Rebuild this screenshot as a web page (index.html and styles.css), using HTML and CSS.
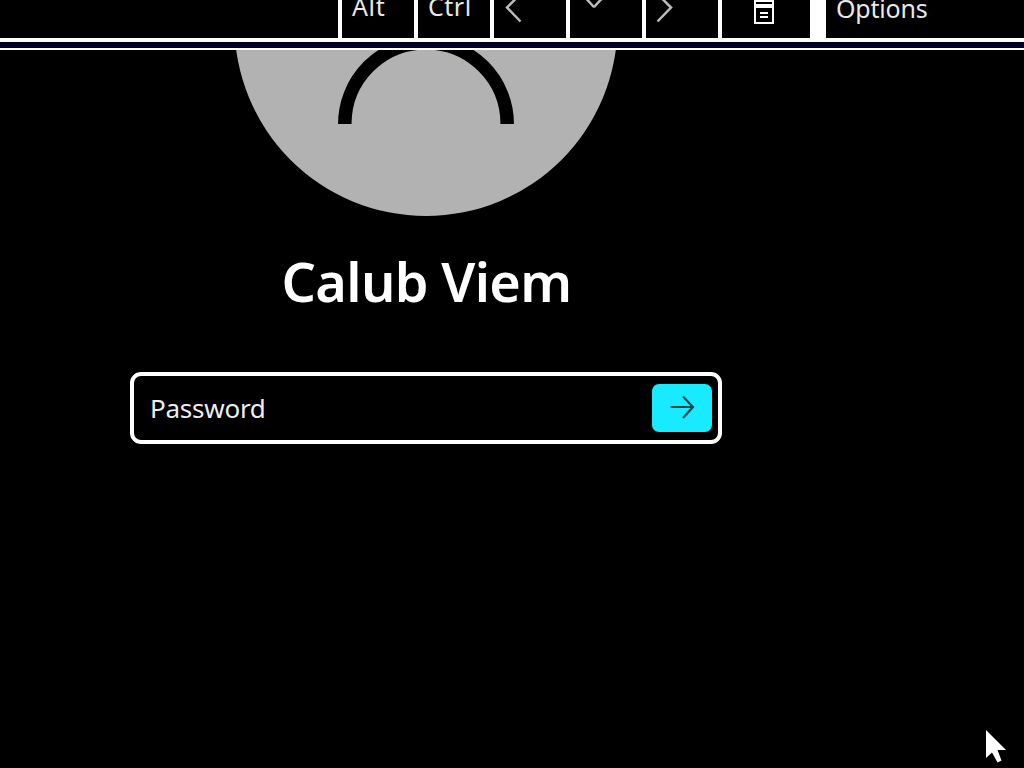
FILE: index.html
```
<!DOCTYPE html>
<html lang="en">
<head>
<meta charset="utf-8">
<title>Sign in</title>
<link rel="stylesheet" href="styles.css">
</head>
<body>
<header class="keyboard">
  <div class="key key-blank"></div>
  <div class="key key-alt"><span>Alt</span></div>
  <div class="key key-ctrl"><span>Ctrl</span></div>
  <div class="key"><svg width="72" height="38" viewBox="0 0 72 38"><path class="arrow" d="M26.500 -6L13 7.500L26.500 21.500"/></svg></div>
  <div class="key"><svg width="72" height="38" viewBox="0 0 72 38"><path class="arrow" d="M12 -6L22.500 5.500Q24 7.500 25.500 5.500L36 -6"/></svg></div>
  <div class="key"><svg width="72" height="38" viewBox="0 0 72 38"><path class="arrow" d="M11.500 -6L25 7.500L11.500 21.500"/></svg></div>
  <div class="key key-menu"><svg width="88" height="38" viewBox="0 0 88 38"><path fill="#fff" fill-rule="evenodd" d="M32 0H52V24H32ZM34 2V4H50V2ZM34 8V22H50V8ZM38 12H46V14H38ZM38 16H46V18H38Z"/></svg></div>
  <div class="key key-options"><span>Options</span></div>
</header>
<main class="login">
  <svg class="avatar" width="384" height="166" viewBox="234 50 384 166">
    <circle cx="426" cy="24.500" r="191.500" fill="#b2b2b2"/>
    <path d="M344.800 124A81.200 81.200 0 0 1 507.200 124" fill="none" stroke="#000" stroke-width="13.500"/>
  </svg>
  <h1 class="name">Calub Viem</h1>
  <div class="password">
    <span class="label">Password</span>
    <button class="submit" aria-label="Submit"><svg width="60" height="48" viewBox="0 0 60 48"><path d="M18.500 23H41M31 12.500L41 23L31 34" fill="none" stroke="#07464e" stroke-width="2.200"/></svg></button>
  </div>
</main>
<svg class="cursor" width="24" height="36" viewBox="0 0 24 36"><path fill="#fff" d="M2 1V29L8 23.500L13.500 33.500L17.500 31.500L13.500 21H22Z"/></svg>
</body>
</html>
```
FILE: styles.css
```
* { box-sizing: border-box; }
body {
  margin: 0;
  width: 1024px;
  height: 768px;
  overflow: hidden;
  background: #000;
  color: #fff;
  font-family: "Noto Sans", "Open Sans", sans-serif;
}
.keyboard {
  display: flex;
  gap: 4px;
  height: 50px;
  background: linear-gradient(#fff 42px, #000028 42px, #000028 48px, #fff 48px);
}
.key {
  width: 72px;
  height: 38px;
  background: #000;
  overflow: hidden;
  font-size: 25px;
  line-height: 34px;
  color: #e8e8e8;
  white-space: nowrap;
}
.key svg { display: block; }
.key span { display: block; margin-top: -11px; }
.key-blank { width: 338px; }
.key-alt { padding-left: 10px; letter-spacing: 0.6px; }
.key-ctrl { padding-left: 10px; letter-spacing: 0.5px; }
.key-menu { width: 88px; }
.key-options { width: 198px; margin-left: 12px; padding-left: 10px; letter-spacing: -0.2px; }
.key-options span { margin-top: -9px; }
.arrow { fill: none; stroke: #bcbcbc; stroke-width: 2.5; }
.login {
  display: flex;
  flex-direction: column;
  align-items: center;
  width: 852px;
}
.avatar { display: block; }
.name {
  margin: 25px 0 0;
  height: 82px;
  font-size: 54px;
  line-height: 80px;
  font-weight: 600;
  letter-spacing: -0.65px;
  text-indent: 1px;
  white-space: nowrap;
}
.password {
  display: flex;
  align-items: center;
  justify-content: space-between;
  width: 592px;
  height: 72px;
  margin-top: 49px;
  padding: 0 6px 0 16px;
  border: 4px solid #fff;
  border-radius: 11px;
}
.label { font-size: 26px; line-height: 36px; letter-spacing: -0.25px; color: #eee; }
.submit {
  width: 60px;
  height: 48px;
  padding: 0;
  border: 0;
  border-radius: 7px;
  background: #18ebff;
}
.submit svg { display: block; }
.cursor { position: absolute; left: 984px; top: 729px; }
```
